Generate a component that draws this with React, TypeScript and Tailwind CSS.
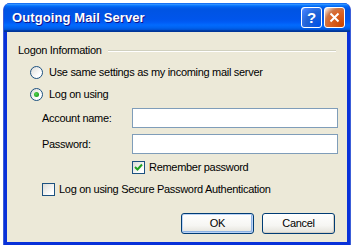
import React from "react";

const font = { fontFamily: '"Liberation Sans", Arial, sans-serif' };

const Radio = ({ checked }: { checked?: boolean }) => (
  <span className="w-[13px] h-[13px] rounded-full border border-[#1c5180] bg-[linear-gradient(135deg,#dcdcd7_0%,#ffffff_70%)] flex items-center justify-center shrink-0">
    {checked && <span className="w-[5px] h-[5px] rounded-full bg-[radial-gradient(circle_at_40%_40%,#55d551_0%,#21a121_70%,#1a7e1a_100%)]" />}
  </span>
);

const Check = ({ checked }: { checked?: boolean }) => (
  <span className="w-[13px] h-[13px] border border-[#1c5180] bg-[linear-gradient(135deg,#dcdcd7_0%,#ffffff_80%)] flex items-center justify-center shrink-0">
    {checked && (
      <svg width="9" height="9" viewBox="0 0 9 9">
        <path d="M1 4 L3.5 6.5 L8 1.5" stroke="#21a121" strokeWidth="2" fill="none" />
      </svg>
    )}
  </span>
);

const Button = ({ label, isDefault }: { label: string; isDefault?: boolean }) => (
  <button
    className={
      "w-[73px] h-[21px] rounded-[3px] border border-[#003c74] bg-[linear-gradient(180deg,#ffffff_0%,#f6f6f3_60%,#e3e2da_100%)] text-[11px] text-black flex items-center justify-center " +
      (isDefault ? "shadow-[inset_0_0_0_1px_#bcd4f6,inset_-1px_-1px_0_1px_#8db2e3]" : "shadow-[inset_-1px_-1px_0_0_#d6d0c5]")
    }
  >
    {label}
  </button>
);

export default function App() {
  return (
    <div className="w-[355px] h-[248px] bg-white overflow-hidden pl-[3px] pt-[3px]" style={font}>
      <div className="w-[348px] h-[242px] flex flex-col rounded-t-[7px] bg-[#0831d9] border-l border-r border-[#3c5ed8] overflow-hidden">
        {/* title bar */}
        <div className="h-[29px] shrink-0 flex items-center pl-[8px] pr-[5px] bg-[linear-gradient(180deg,#0058ee_0%,#3593ff_4%,#288eff_6%,#127dff_8%,#036ffc_10%,#0262ee_14%,#0057e5_20%,#0054e3_24%,#0055eb_56%,#005bf5_66%,#026afe_76%,#0062ef_86%,#0052d6_92%,#0040ab_94%,#003092_100%)]">
          <span className="text-white text-[13px] font-bold tracking-[0.1px] [text-shadow:1px_1px_#0f1089]">
            Outgoing Mail Server
          </span>
          <div className="ml-auto flex gap-[2px]">
            <div className="w-[21px] h-[21px] rounded-[3px] border border-white bg-[radial-gradient(circle_at_90%_90%,#0054e9_0%,#2263d5_55%,#4482ff_90%,#fff_100%)] flex items-center justify-center text-white font-bold text-[15px] leading-none">
              ?
            </div>
            <div className="w-[21px] h-[21px] rounded-[3px] border border-white bg-[radial-gradient(circle_at_90%_90%,#cc4600_0%,#dc6527_55%,#cd7546_70%,#fff_100%)] flex items-center justify-center">
              <svg width="11" height="11" viewBox="0 0 11 11">
                <path d="M1.5 1.5 L9.5 9.5 M9.5 1.5 L1.5 9.5" stroke="white" strokeWidth="2" />
              </svg>
            </div>
          </div>
        </div>
        {/* client */}
        <div className="flex-1 mx-[3px] mb-[3px] bg-[#ece9d8] text-[11px] tracking-[-0.3px] text-black flex flex-col">
          <div className="mt-[12px] h-[13px] flex items-center pl-[11px] pr-[11px]">
            <span>Logon Information</span>
            <span className="flex-1 ml-[6px] h-[2px] border-t border-[#d0d0bf] border-b border-b-white" />
          </div>
          <div className="mt-[9px] h-[13px] flex items-center gap-[6px] pl-[23px]">
            <Radio />
            <span>Use same settings as my incoming mail server</span>
          </div>
          <div className="mt-[9px] h-[13px] flex items-center gap-[6px] pl-[23px]">
            <Radio checked />
            <span>Log on using</span>
          </div>
          <div className="mt-[7px] h-[20px] flex items-center pl-[35px] pr-[9px]">
            <span className="w-[90px]">Account name:</span>
            <div className="flex-1 h-full bg-white border border-[#7f9db9]" />
          </div>
          <div className="mt-[6px] h-[20px] flex items-center pl-[35px] pr-[9px]">
            <span className="w-[90px]">Password:</span>
            <div className="flex-1 h-full bg-white border border-[#7f9db9]" />
          </div>
          <div className="mt-[7px] h-[13px] flex items-center gap-[4px] pl-[125px]">
            <Check checked />
            <span>Remember password</span>
          </div>
          <div className="mt-[9px] h-[13px] flex items-center gap-[4px] pl-[35px]">
            <Check />
            <span>Log on using Secure Password Authentication</span>
          </div>
          <div className="mt-[17px] flex justify-end gap-[8px] pr-[12px]">
            <Button label="OK" isDefault />
            <Button label="Cancel" />
          </div>
        </div>
      </div>
    </div>
  );
}
